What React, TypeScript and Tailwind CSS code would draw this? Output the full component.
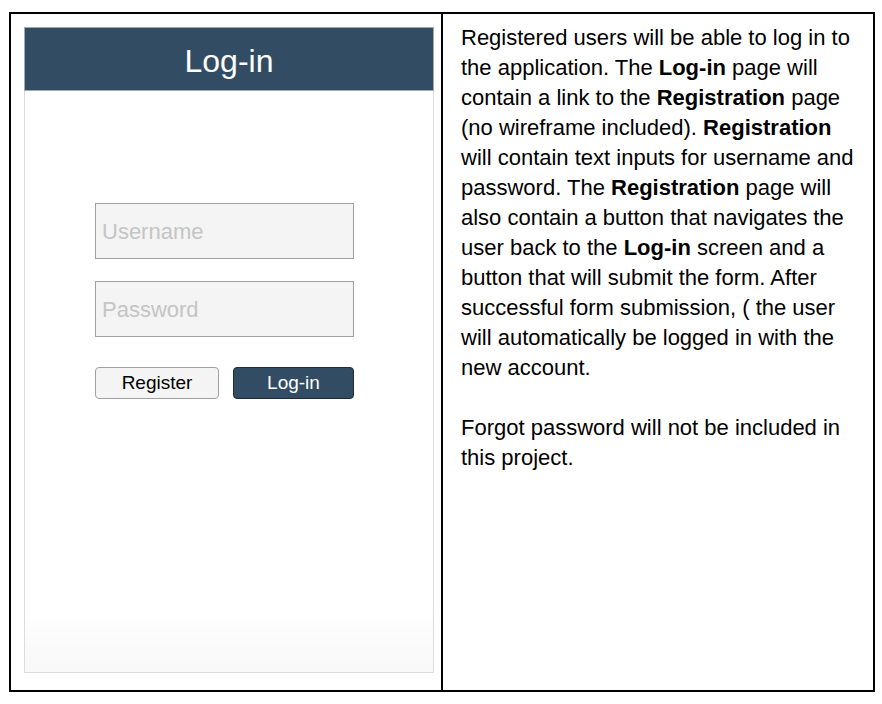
export default function App() {
  return (
    <div className="w-[882px] h-[704px] bg-white pt-[12px] pl-[9px] font-['Liberation_Sans',Arial,sans-serif]">
      <div className="flex w-[866px] h-[680px] border-2 border-black">
        {/* wireframe */}
        <div className="w-[432px] shrink-0 pl-[13px] pt-[13px] border-r-2 border-black">
          <div className="w-[410px] h-[646px] flex flex-col border border-[#dcdcdc] bg-gradient-to-b from-white from-[90%] to-[#f8f8f8]">
            <div className="h-[64px] -m-px flex items-center justify-center pt-[3px] bg-[#324d63] border border-[#a3a9ae] text-white text-[32px]">
              Log-in
            </div>
            <div className="flex flex-col pl-[70px] pt-[113px]">
              <div className="w-[259px] h-[56px] flex items-center pl-[6px] bg-[#f4f4f4] border border-[#a0a0a0] text-[22px] text-[#c4c4c4]">
                Username
              </div>
              <div className="mt-[22px] w-[259px] h-[56px] flex items-center pl-[6px] bg-[#f4f4f4] border border-[#a0a0a0] text-[22px] text-[#c4c4c4]">
                Password
              </div>
              <div className="mt-[30px] flex gap-[14px]">
                <div className="w-[124px] h-[32px] flex items-center justify-center rounded-[4px] bg-[#f4f4f4] border border-[#a0a0a0] text-[19px] text-black">
                  Register
                </div>
                <div className="w-[121px] h-[32px] flex items-center justify-center rounded-[4px] bg-[#324d63] border border-[#1d2c38] text-[19px] text-white">
                  Log-in
                </div>
              </div>
            </div>
          </div>
        </div>
        {/* notes */}
        <div className="flex-1 pl-[18px] pr-[10px] pt-[9px] text-[22px] leading-[30px] text-black">
          <p>
            Registered users will be able to log in to the application. The <b>Log-in</b> page will contain a link
            to the <b>Registration</b> page (no wireframe included). <b>Registration</b> will contain text inputs for
            username and password. The <b>Registration</b> page will also contain a button that navigates the user
            back to the <b>Log-in</b> screen and a button that will submit the form. After successful form
            submission, ( the user will automatically be logged in with the new account.
          </p>
          <p className="mt-[30px]">Forgot password will not be included in this project.</p>
        </div>
      </div>
    </div>
  );
}
